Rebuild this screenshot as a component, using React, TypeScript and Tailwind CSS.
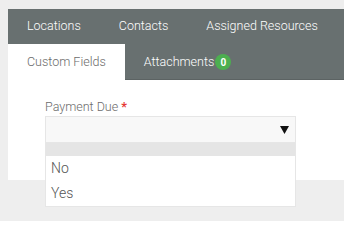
import React from "react";

const topTabs = ["Locations", "Contacts", "Assigned Resources"];

export default function App() {
  return (
    <div
      className="h-[221px] w-[344px] overflow-hidden bg-[#eeeeee] pl-[8px] pt-[9px] font-light"
      style={{ fontFamily: "Roboto, 'Liberation Sans', sans-serif" }}
    >
      <div className="relative w-[400px]">
        <div className="flex h-[35px] items-center whitespace-nowrap bg-[#687070] text-[12.5px] text-white">
          {topTabs.map((t) => (
            <div key={t} className="px-[19px]">
              {t}
            </div>
          ))}
        </div>
        <div className="flex h-[36px] whitespace-nowrap border-b border-[#5c6363] bg-[#687070] text-[12.5px]">
          <div className="flex h-[36px] items-center bg-white px-[19px] pt-[1px] text-[#6b6b6b]">
            Custom Fields
          </div>
          <div className="flex items-center pl-[19px] pt-[1px] text-white">
            Attachments
            <span className="ml-[1px] flex h-[16px] w-[16px] items-center justify-center rounded-full bg-[#4caf50] text-[10px] font-bold text-white">
              0
            </span>
          </div>
        </div>
        <div className="h-[100px] bg-white pl-[37px] pt-[19px]">
          <div className="text-[12.5px] leading-[15px] text-[#6b6b6b]">
            Payment Due <span className="font-bold text-[#e53935]">*</span>
          </div>
          <div className="relative mt-[2px] w-[251px]">
            <div className="flex h-[27px] items-center justify-end border border-[#e6e6e6] bg-[#f8f8f8] pr-[6px]">
              <svg width="9" height="8" viewBox="0 0 9 8">
                <polygon points="0,0 9,0 4.5,8" fill="#111" />
              </svg>
            </div>
            <div className="absolute left-0 top-[27px] w-[251px] border border-t-0 border-[#e6e6e6] bg-white text-[14px] text-[#555]">
              <div className="h-[13px] bg-[#e5e5e5]" />
              <div className="flex h-[25px] items-center pl-[5px]">No</div>
              <div className="flex h-[25px] items-center pl-[5px]">Yes</div>
            </div>
          </div>
        </div>
      </div>
    </div>
  );
}
